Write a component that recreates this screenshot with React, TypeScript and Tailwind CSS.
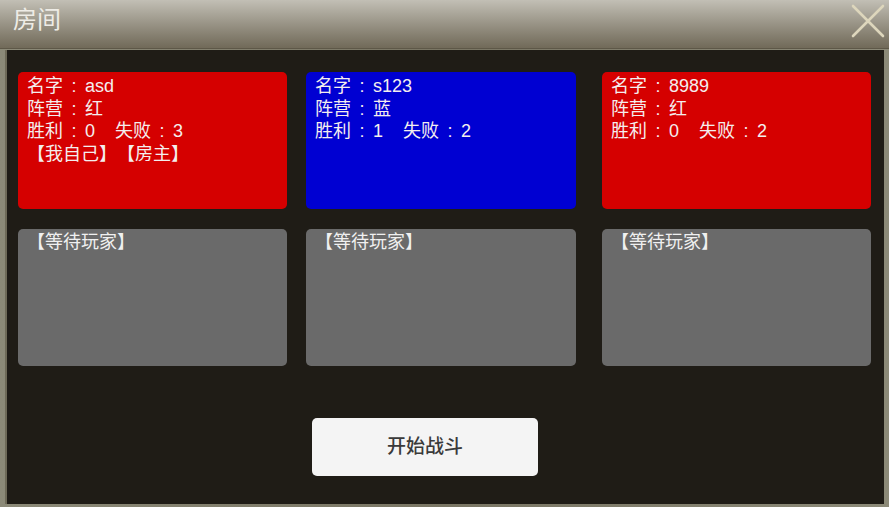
import React from 'react';

type Player = {
  name: string;
  camp: string;
  win: number;
  lose: number;
  tags?: string;
  color: 'red' | 'blue';
};

const players: Player[] = [
  { name: 'asd', camp: '红', win: 0, lose: 3, tags: '【我自己】【房主】', color: 'red' },
  { name: 's123', camp: '蓝', win: 1, lose: 2, color: 'blue' },
  { name: '8989', camp: '红', win: 0, lose: 2, color: 'red' },
];

const font = { fontFamily: '"Liberation Sans", "Noto Sans CJK SC", sans-serif' };

// centred colon, like the game font draws it
const Colon = () => <span className="inline-block w-[22px] text-center">:</span>;

function PlayerCard({ p, className }: { p: Player; className: string }) {
  return (
    <div
      className={`h-[137px] rounded-[5px] pl-[9px] pt-[3px] text-[18px] leading-[22.6px] text-[#f4eeee] [text-spacing-trim:space-all] ${
        p.color === 'red' ? 'bg-[#d50000]' : 'bg-[#0000d2]'
      } ${className}`}
    >
      <div>
        名字<Colon />{p.name}
      </div>
      <div>
        阵营<Colon />{p.camp}
      </div>
      <div>
        胜利<Colon />{p.win}
        <span className="inline-block w-[20px]" />
        失败<Colon />{p.lose}
      </div>
      {p.tags && <div>{p.tags}</div>}
    </div>
  );
}

function EmptySlot({ className }: { className: string }) {
  return (
    <div
      className={`h-[137px] rounded-[5px] bg-[#6a6a6a] pl-[9px] pt-[2px] text-[18px] leading-[22.6px] text-[#f0f0f0] [text-spacing-trim:space-all] ${className}`}
    >
      【等待玩家】
    </div>
  );
}

export default function App() {
  const widths = ['ml-[11px] w-[269px]', 'ml-[19px] w-[270px]', 'ml-[26px] w-[269px]'];
  return (
    <div className="w-[889px] h-[507px] flex flex-col bg-[#7d7868] overflow-hidden" style={font}>
      {/* title bar */}
      <div className="h-[49px] flex items-start justify-between bg-gradient-to-b from-[#c2bfb5] to-[#716a59] border-b border-[#5e5848]">
        <div className="pl-[13px] pt-[4px] text-[24px] leading-[32px] text-[#eeece6]">房间</div>
        <svg width="38" height="38" viewBox="0 0 38 38" className="mr-[2px] mt-[2px]">
          <path d="M4 4 L34 34 M34 4 L4 34" stroke="#ddd6bc" strokeWidth="2.6" strokeLinecap="round" />
        </svg>
      </div>
      {/* body */}
      <div className="flex-1 flex px-[5px] pb-[3px] pt-[1px] bg-gradient-to-r from-[#8c8a78] via-[#7a7664] to-[#8c8a78]">
        <div className="flex-1 bg-[#1f1c16] border-l-2 border-[#6e6a58] pt-[22px] flex flex-col">
          <div className="flex">
            {players.map((p, i) => (
              <PlayerCard key={p.name} p={p} className={widths[i]} />
            ))}
          </div>
          <div className="flex mt-[20px]">
            {widths.map((w) => (
              <EmptySlot key={w} className={w} />
            ))}
          </div>
          <div className="flex mt-[52px]">
            <button className="ml-[305px] w-[226px] h-[58px] rounded-[5px] bg-[#f4f4f4] text-[19px] font-medium text-[#3a3a3a] flex items-center justify-center">
              开始战斗
            </button>
          </div>
        </div>
      </div>
    </div>
  );
}
